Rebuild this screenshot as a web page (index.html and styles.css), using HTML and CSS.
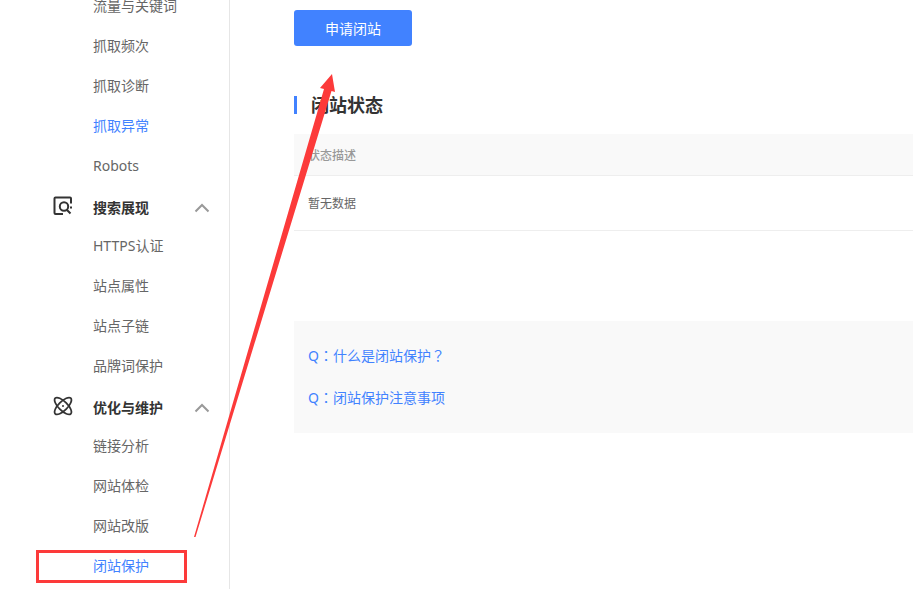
FILE: index.html
```html
<!DOCTYPE html>
<html lang="zh-CN">
<head>
    <meta charset="UTF-8">
    <meta name="viewport" content="width=device-width, initial-scale=1.0">
    <title>闭站保护</title>
    <link rel="stylesheet" href="styles.css">
</head>
<body>
    <div class="page">
        <nav class="sidebar">
            <ul class="menu">
                <li><a href="#">流量与关键词</a></li>
                <li><a href="#">抓取频次</a></li>
                <li><a href="#">抓取诊断</a></li>
                <li><a href="#" class="active">抓取异常</a></li>
                <li><a href="#">Robots</a></li>
            </ul>
            <button type="button" class="group">
                <svg class="group-icon" viewBox="0 0 20 20" fill="none" stroke="#333" stroke-width="2">
                    <path d="M10 18H2.500Q1.500 18 1.500 17V2.500Q1.500 1.500 2.500 1.500H17Q18 1.500 18 2.500V7.500"/>
                    <circle cx="11" cy="10.500" r="4.200"/>
                    <path d="M14 14L17.500 17.500M17 11.500H19"/>
                </svg>
                <span>搜索展现</span>
                <svg class="arrow-up" viewBox="0 0 16 10" fill="none" stroke="#999" stroke-width="2">
                    <path d="M1.500 8.500L8 2L14.500 8.500"/>
                </svg>
            </button>
            <ul class="menu">
                <li><a href="#">HTTPS认证</a></li>
                <li><a href="#">站点属性</a></li>
                <li><a href="#">站点子链</a></li>
                <li><a href="#">品牌词保护</a></li>
            </ul>
            <button type="button" class="group">
                <svg class="group-icon" viewBox="0 0 20 20" fill="none" stroke="#333" stroke-width="1.800">
                    <ellipse cx="10" cy="10" rx="11" ry="4.500" transform="rotate(45 10 10)"/>
                    <ellipse cx="10" cy="10" rx="11" ry="4.500" transform="rotate(-45 10 10)"/>
                    <circle cx="10" cy="10" r="1" fill="#333" stroke="none"/>
                </svg>
                <span>优化与维护</span>
                <svg class="arrow-up" viewBox="0 0 16 10" fill="none" stroke="#999" stroke-width="2">
                    <path d="M1.500 8.500L8 2L14.500 8.500"/>
                </svg>
            </button>
            <ul class="menu">
                <li><a href="#">链接分析</a></li>
                <li><a href="#">网站体检</a></li>
                <li><a href="#">网站改版</a></li>
                <li class="marked"><a href="#" class="active">闭站保护</a></li>
            </ul>
        </nav>

        <main class="content">
            <button type="button" class="apply">申请闭站</button>
            <h2>闭站状态</h2>
            <table class="status">
                <thead>
                    <tr><th>状态描述</th></tr>
                </thead>
                <tbody>
                    <tr><td>暂无数据</td></tr>
                </tbody>
            </table>
            <div class="faq">
                <a href="#">Q<span class="mark" lang="zh-TW">：</span>什么是闭站保护<span class="mark" lang="zh-TW">？</span></a>
                <a href="#">Q<span class="mark" lang="zh-TW">：</span>闭站保护注意事项</a>
            </div>
        </main>

        <!-- arrow from the menu entry to the button -->
        <svg class="pointer" viewBox="0 0 142 464">
            <path d="M0 463L130 15L126 14L138 0L141 18L137.500 17L1.500 463Z" fill="#fc3a3a"/>
        </svg>
    </div>
</body>
</html>
```

FILE: styles.css
```css
*,
*::after {
    box-sizing: border-box;
}

body {
    margin: 0;
    font-family: "Noto Sans", "Noto Sans CJK SC", sans-serif;
    font-size: 14px;
    color: #666;
    background: #fff;
}

a {
    color: #666;
    text-decoration: none;
}

button {
    font-family: inherit;
    font-size: 14px;
    border: none;
    cursor: pointer;
}

.page {
    position: relative;
    display: flex;
    height: 100vh;
    overflow: hidden;
}

/* Sidebar */
.sidebar {
    flex: none;
    width: 230px;
    border-right: 1px solid #e6e6e6;
}

.menu {
    margin: 0;
    padding: 0;
    list-style: none;
}

/* the list is scrolled a little */
.menu:first-child {
    margin-top: -14px;
}

.menu a {
    display: block;
    height: 40px;
    padding-left: 93px;
    line-height: 40px;
}

.menu .active,
.faq a {
    color: #4182ff;
}

.group {
    display: flex;
    align-items: center;
    width: 100%;
    height: 40px;
    padding: 2px 19px 0 53px;
    background: none;
    color: #333;
    font-weight: bold;
    text-align: left;
}

.group span {
    flex: 1;
    margin-left: 20px;
}

.group-icon {
    width: 20px;
    height: 20px;
    margin-bottom: 2px;
}

.arrow-up {
    width: 16px;
    height: 10px;
    margin-top: 2px;
}

.marked {
    position: relative;
}

.marked::after {
    content: "";
    position: absolute;
    top: 4px;
    left: 36px;
    width: 151px;
    height: 33px;
    border: 3px solid #fc3a3a;
    pointer-events: none;
}

/* Content */
.content {
    flex: 1;
    padding: 10px 0 0 64px;
}

.apply {
    display: block;
    width: 118px;
    height: 36px;
    padding: 0;
    border-radius: 3px;
    background: #4182ff;
    color: #fff;
}

h2 {
    margin: 50px 0 20px;
    padding-left: 14px;
    border-left: 3px solid #4182ff;
    color: #333;
    font-size: 18px;
    line-height: 18px;
}

.status {
    width: 100%;
    border-spacing: 0;
    font-size: 12px;
    text-align: left;
}

.status th {
    height: 42px;
    padding: 0 14px;
    border-bottom: 1px solid #eee;
    background: #f9f9f9;
    color: #999;
    font-weight: 500;
}

.status td {
    height: 55px;
    padding: 0 14px;
    border-bottom: 1px solid #eee;
}

.faq {
    margin-top: 90px;
    padding: 14px;
    background: #f9f9f9;
}

.faq a {
    display: block;
    height: 42px;
    line-height: 42px;
}

/* centred full-width punctuation */
.mark {
    font-family: "Noto Sans CJK TC", sans-serif;
    line-height: 1;
}

.pointer {
    position: absolute;
    top: 74px;
    left: 194px;
    width: 142px;
    height: 464px;
    pointer-events: none;
}
```
